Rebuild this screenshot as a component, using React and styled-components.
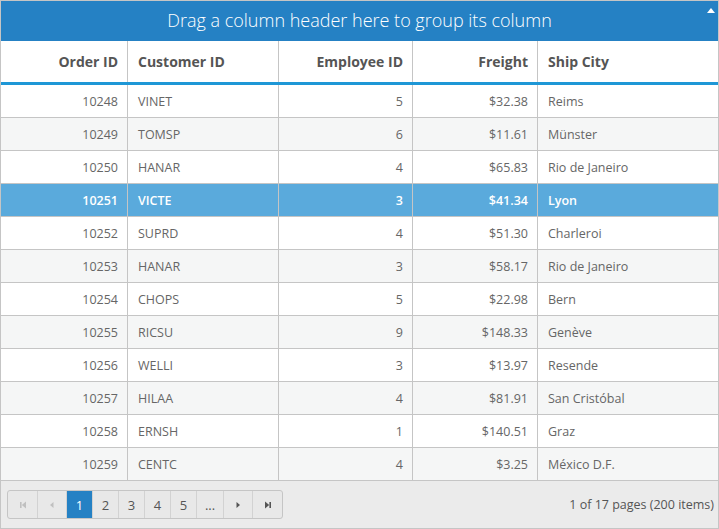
import React from "react";
import styled, { createGlobalStyle } from "styled-components";

const Global = createGlobalStyle`
  html, body { margin: 0; padding: 0; background: #fff; }
  body { font-family: "Open Sans", "Noto Sans", sans-serif; }
`;

const rows = [
  [10248, "VINET", 5, "$32.38", "Reims"],
  [10249, "TOMSP", 6, "$11.61", "Münster"],
  [10250, "HANAR", 4, "$65.83", "Rio de Janeiro"],
  [10251, "VICTE", 3, "$41.34", "Lyon"],
  [10252, "SUPRD", 4, "$51.30", "Charleroi"],
  [10253, "HANAR", 3, "$58.17", "Rio de Janeiro"],
  [10254, "CHOPS", 5, "$22.98", "Bern"],
  [10255, "RICSU", 9, "$148.33", "Genève"],
  [10256, "WELLI", 3, "$13.97", "Resende"],
  [10257, "HILAA", 4, "$81.91", "San Cristóbal"],
  [10258, "ERNSH", 1, "$140.51", "Graz"],
  [10259, "CENTC", 4, "$3.25", "México D.F."],
];

const cols = "127px 151px 134px 125px 1fr";
const aligns = ["right", "left", "right", "right", "left"];

const Grid = styled.div`
  width: 719px;
  height: 529px;
  box-sizing: border-box;
  border: 1px solid #c5c5c5;
  display: flex;
  flex-direction: column;
  overflow: hidden;
`;

const GroupBar = styled.div`
  position: relative;
  height: 40px;
  flex-shrink: 0;
  background: #2581c4;
  color: #fff;
  font-size: 18px;
  font-weight: 300;
  display: flex;
  align-items: center;
  justify-content: center;
  padding-bottom: 2px;
  box-sizing: border-box;
`;

const Collapse = styled.span`
  position: absolute;
  right: 3px;
  top: 7px;
  width: 0;
  height: 0;
  border-left: 4px solid transparent;
  border-right: 4px solid transparent;
  border-bottom: 5px solid #fff;
`;

const HeaderRow = styled.div`
  display: grid;
  grid-template-columns: ${cols};
  height: 44px;
  flex-shrink: 0;
  border-bottom: 3px solid #1e97d6;
  box-sizing: border-box;
`;

const HeadCell = styled.div`
  display: flex;
  align-items: center;
  justify-content: ${(p) => (p.$align === "right" ? "flex-end" : "flex-start")};
  padding: 0 9px 1px 10px;
  font-size: 14px;
  font-weight: 700;
  color: #555;
  border-right: ${(p) => (p.$last ? "none" : "1px solid #c5c5c5")};
  box-sizing: border-box;
`;

const Body = styled.div`
  display: flex;
  flex-direction: column;
  flex-shrink: 0;
`;

const Row = styled.div`
  display: grid;
  grid-template-columns: ${cols};
  height: 33px;
  box-sizing: border-box;
  border-bottom: 1px solid #c5c5c5;
  background: ${(p) => (p.$selected ? "#5aaadc" : p.$alt ? "#f5f6f6" : "#fff")};
  color: ${(p) => (p.$selected ? "#fff" : "#666")};
  font-weight: ${(p) => (p.$selected ? 600 : 400)};
`;

const Cell = styled.div`
  display: flex;
  align-items: center;
  justify-content: ${(p) => (p.$align === "right" ? "flex-end" : "flex-start")};
  padding: 0 9px 0 10px;
  font-size: 12.5px;
  border-right: ${(p) => (p.$last ? "none" : "1px solid #c5c5c5")};
  box-sizing: border-box;
  white-space: nowrap;
`;

const Pager = styled.div`
  flex: 1;
  background: #ebebeb;
  display: flex;
  align-items: center;
  justify-content: space-between;
  padding: 0 4px 0 6px;
`;

const PagerButtons = styled.div`
  display: flex;
  height: 27px;
  border: 1px solid #c5c5c5;
  border-radius: 3px;
  overflow: hidden;
  background: #e8e8e8;
`;

const PageBtn = styled.div`
  width: ${(p) => p.$w || 25}px;
  display: flex;
  align-items: center;
  justify-content: center;
  font-size: 13px;
  color: ${(p) => (p.$active ? "#fff" : "#555")};
  background: ${(p) => (p.$active ? "#2581c4" : "transparent")};
  border-left: ${(p) => (p.$first ? "none" : "1px solid #d2d2d2")};
  box-sizing: border-box;
`;

const Info = styled.div`
  font-size: 12.5px;
  color: #555;
`;

const Icon = ({ kind, color }) => {
  const c = color;
  if (kind === "first")
    return (
      <svg width="10" height="10" viewBox="0 0 10 10">
        <rect x="2" y="2" width="1.6" height="6" fill={c} />
        <path d="M8 1.5 L3.8 5 L8 8.5 Z" fill={c} />
      </svg>
    );
  if (kind === "prev")
    return (
      <svg width="10" height="10" viewBox="0 0 10 10">
        <path d="M6.5 2 L3 5 L6.5 8 Z" fill={c} />
      </svg>
    );
  if (kind === "next")
    return (
      <svg width="10" height="10" viewBox="0 0 10 10">
        <path d="M3.5 2 L7 5 L3.5 8 Z" fill={c} />
      </svg>
    );
  return (
    <svg width="10" height="10" viewBox="0 0 10 10">
      <path d="M2 1.5 L6.2 5 L2 8.5 Z" fill={c} />
      <rect x="6.4" y="2" width="1.6" height="6" fill={c} />
    </svg>
  );
};

const headers = ["Order ID", "Customer ID", "Employee ID", "Freight", "Ship City"];

export default function App() {
  return (
    <>
      <Global />
      <Grid>
        <GroupBar>
          Drag a column header here to group its column
          <Collapse />
        </GroupBar>
        <HeaderRow>
          {headers.map((h, i) => (
            <HeadCell key={h} $align={aligns[i]} $last={i === 4}>
              {h}
            </HeadCell>
          ))}
        </HeaderRow>
        <Body>
          {rows.map((r, ri) => (
            <Row key={r[0]} $alt={ri % 2 === 1} $selected={r[0] === 10251}>
              {r.map((v, i) => (
                <Cell key={i} $align={aligns[i]} $last={i === 4}>
                  {v}
                </Cell>
              ))}
            </Row>
          ))}
        </Body>
        <Pager>
          <PagerButtons>
            <PageBtn $first $w={29}>
              <Icon kind="first" color="#c0c0c0" />
            </PageBtn>
            <PageBtn $w={29}>
              <Icon kind="prev" color="#c0c0c0" />
            </PageBtn>
            <PageBtn $active $w={26}>1</PageBtn>
            <PageBtn $w={26}>2</PageBtn>
            <PageBtn $w={26}>3</PageBtn>
            <PageBtn $w={26}>4</PageBtn>
            <PageBtn $w={26}>5</PageBtn>
            <PageBtn $w={27}>...</PageBtn>
            <PageBtn $w={29}>
              <Icon kind="next" color="#555" />
            </PageBtn>
            <PageBtn $w={30}>
              <Icon kind="last" color="#555" />
            </PageBtn>
          </PagerButtons>
          <Info>1 of 17 pages (200 items)</Info>
        </Pager>
      </Grid>
    </>
  );
}
